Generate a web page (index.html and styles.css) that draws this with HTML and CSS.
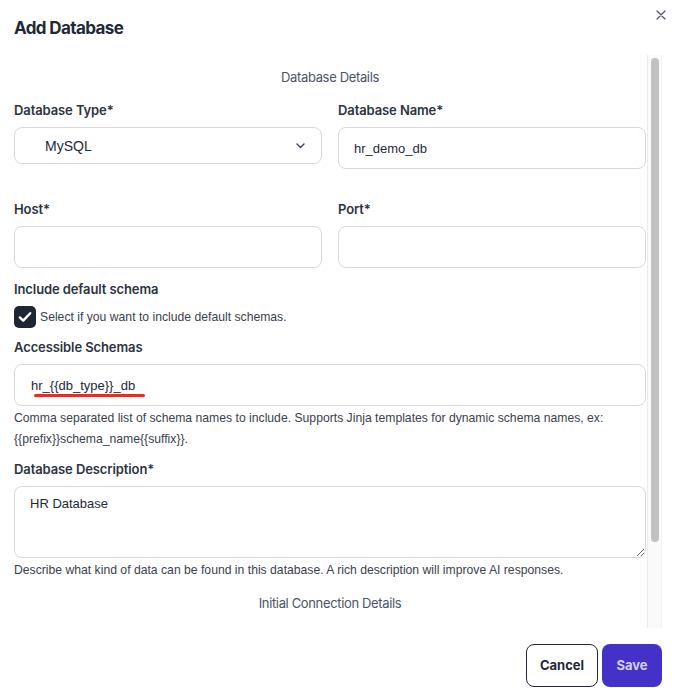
FILE: index.html
```html
<!DOCTYPE html>
<html lang="en">
<head>
<meta charset="utf-8">
<title>Add Database</title>
<link rel="stylesheet" href="styles.css">
</head>
<body>
<div class="modal">
  <div class="header">
    <h1 class="title">Add Database</h1>
    <button class="close" aria-label="Close">
      <svg width="10" height="10" viewBox="0 0 10 10"><path d="M1 1L9 9M9 1L1 9" stroke="#4b5563" stroke-width="1.2" stroke-linecap="round" fill="none"/></svg>
    </button>
  </div>
  <div class="body">
    <div class="content">
      <div class="section-title">Database Details</div>
      <div class="grid row-first">
        <div class="field">
          <label class="label">Database Type*</label>
          <div class="select">
            <span>MySQL</span>
            <svg width="9" height="6" viewBox="0 0 9 6"><path d="M1 1L4.5 4.5L8 1" stroke="#374151" stroke-width="1.4" fill="none" stroke-linecap="round" stroke-linejoin="round"/></svg>
          </div>
        </div>
        <div class="field">
          <label class="label">Database Name*</label>
          <input class="input" type="text" value="hr_demo_db">
        </div>
      </div>
      <div class="grid row-second">
        <div class="field">
          <label class="label">Host*</label>
          <input class="input" type="text" value="">
        </div>
        <div class="field">
          <label class="label">Port*</label>
          <input class="input" type="text" value="">
        </div>
      </div>
      <label class="label gap-include">Include default schema</label>
      <div class="check-row">
        <span class="checkbox">
          <svg width="14" height="12" viewBox="0 0 14 12"><path d="M1.8 6.4L5.2 9.6L12.2 2.2" stroke="#fff" stroke-width="2.4" fill="none" stroke-linecap="round" stroke-linejoin="round"/></svg>
        </span>
        <span class="check-text">Select if you want to include default schemas.</span>
      </div>
      <label class="label gap-std">Accessible Schemas</label>
      <div class="schema-wrap">
        <input class="input full schema" type="text" value="hr_{{db_type}}_db">
        <span class="annot"></span>
      </div>
      <p class="help">Comma separated list of schema names to include. Supports Jinja templates for dynamic schema names, ex: {{prefix}}schema_name{{suffix}}.</p>
      <label class="label gap-std">Database Description*</label>
      <textarea class="textarea">HR Database</textarea>
      <p class="help">Describe what kind of data can be found in this database. A rich description will improve AI responses.</p>
      <div class="section-title second">Initial Connection Details</div>
    </div>
    <div class="scrollbar"><div class="thumb"></div></div>
  </div>
  <div class="footer">
    <button class="btn cancel">Cancel</button>
    <button class="btn save">Save</button>
  </div>
</div>
</body>
</html>
```
FILE: styles.css
```css
* { box-sizing: border-box; }
html, body { margin: 0; padding: 0; background: #fff; }
body {
  font-family: "Liberation Sans", Arial, sans-serif;
  color: #374151;
}
.modal {
  width: 684px;
  height: 693px;
  display: flex;
  flex-direction: column;
  overflow: hidden;
}
.header {
  height: 55px;
  display: flex;
  justify-content: space-between;
  align-items: flex-start;
  padding: 0 17px 0 14px;
}
.title {
  margin: 16px 0 0;
  font-family: Inter, "Liberation Sans", sans-serif;
  font-size: 17px;
  line-height: 24px;
  font-weight: 700;
  color: #1f2937;
  letter-spacing: -0.6px;
}
.close {
  margin-top: 9px;
  width: 12px;
  height: 12px;
  padding: 0;
  border: 0;
  background: transparent;
  display: flex;
  align-items: center;
  justify-content: center;
}
.body {
  height: 573px;
  display: flex;
  padding-left: 14px;
}
.content {
  width: 632px;
  overflow: hidden;
}
.scrollbar {
  width: 15px;
  margin-left: 1px;
  background: #fafafa;
  border-left: 1px solid #ececec;
  border-right: 1px solid #f2f2f2;
  padding: 3px 0 0 3px;
}
.thumb {
  width: 8px;
  height: 484px;
  border-radius: 4px;
  background: #c2c2c2;
}
.section-title {
  margin-top: 12px;
  text-align: center;
  font-family: Inter, "Liberation Sans", sans-serif;
  font-size: 13px;
  line-height: 20px;
  letter-spacing: -0.35px;
  color: #4b5563;
}
.section-title.second { margin-top: 12px; }
.grid {
  display: grid;
  grid-template-columns: 308px 308px;
  column-gap: 16px;
  align-items: start;
}
.row-first { margin-top: 13px; }
.row-second { margin-top: 30px; }
.field { display: flex; flex-direction: column; }
.label {
  display: block;
  font-family: Inter, "Liberation Sans", sans-serif;
  font-size: 13px;
  line-height: 20px;
  font-weight: 600;
  letter-spacing: -0.1px;
  color: #2d3340;
  margin-bottom: 7px;
}
.gap-include { margin-top: 11px; }
.gap-std { margin-top: 9px; }
.input {
  height: 42px;
  width: 100%;
  border: 1px solid #d9d9d9;
  border-radius: 8px;
  padding: 0 15px;
  font: inherit;
  font-size: 13px;
  color: #1f2937;
  background: #fff;
  outline: none;
}
.select {
  height: 37px;
  border: 1px solid #d9d9d9;
  border-radius: 8px;
  display: flex;
  align-items: center;
  justify-content: space-between;
  padding: 0 16px 0 30px;
  font-size: 14px;
  color: #1f2937;
}
.check-row {
  display: flex;
  align-items: center;
  gap: 4px;
  height: 22px;
}
.checkbox {
  width: 22px;
  height: 22px;
  border-radius: 5px;
  background: #1e2535;
  display: flex;
  align-items: center;
  justify-content: center;
}
.check-text {
  font-size: 12.2px;
  color: #3b414c;
}
.schema-wrap { position: relative; }
.schema { padding-left: 16px; }
.annot {
  position: absolute;
  left: 20px;
  top: 30px;
  width: 111px;
  height: 3px;
  border-radius: 2px;
  background: #f4291b;
}
.help {
  margin: 2px 0 0;
  font-size: 12.2px;
  line-height: 21px;
  color: #3b414c;
}
.textarea {
  display: block;
  width: 100%;
  height: 72px;
  border: 1px solid #d9d9d9;
  border-radius: 8px;
  padding: 8px 15px;
  font: inherit;
  font-size: 13px;
  line-height: 18px;
  color: #1f2937;
  resize: vertical;
  outline: none;
}
.footer {
  flex: 1;
  display: flex;
  justify-content: flex-end;
  align-items: flex-start;
  gap: 4px;
  padding: 16px 22px 0 0;
}
.btn {
  height: 43px;
  border-radius: 8px;
  padding: 0 0 2px;
  font-family: Inter, "Liberation Sans", sans-serif;
  font-size: 13px;
  font-weight: 700;
}
.cancel {
  width: 72px;
  background: #fff;
  border: 1px solid #1f2937;
  color: #1f2937;
}
.save {
  width: 60px;
  background: #4431c9;
  border: 0;
  color: #d4d0ff;
}
```
